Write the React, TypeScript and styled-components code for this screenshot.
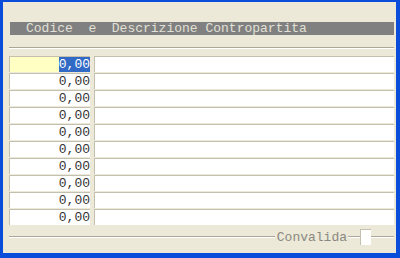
import React from "react";
import styled, { createGlobalStyle } from "styled-components";

const Colors = {
  frame: "#0A4DDA",
  face: "#ECE9D8",
  shadow: "#ACA899",
  cellEdge: "#C4C0B0",
  header: "#808080",
  headerText: "#E2E0D6",
  text: "#333333",
  yellow: "#FFFFC4",
  select: "#316AC5",
};

const GlobalStyle = createGlobalStyle`
  html, body {
    margin: 0;
    padding: 0;
    background: ${Colors.frame};
  }
`;

const Window = styled.div`
  width: 400px;
  height: 258px;
  box-sizing: border-box;
  border-style: solid;
  border-color: ${Colors.frame};
  border-width: 2px 4px 5px 3px;
  background: ${Colors.face};
  padding: 20px 2px 0 6px;
  display: flex;
  flex-direction: column;
  font-family: "Liberation Mono", "Courier New", monospace;
  font-size: 13px;
`;

const HeaderBar = styled.div`
  height: 13px;
  margin-left: 1px;
  background: ${Colors.header};
  color: ${Colors.headerText};
  line-height: 13px;
  padding-left: 16px;
  white-space: pre;
`;

const Separator = styled.div`
  margin-top: 12px;
  height: 1px;
  background: ${Colors.shadow};
  border-bottom: 1px solid #fff;
`;

const Rows = styled.div`
  margin-top: 7px;
  display: flex;
  flex-direction: column;
  gap: 1px;
`;

const Row = styled.div`
  display: grid;
  grid-template-columns: 81px 1fr;
  column-gap: 4px;
  height: 16px;
`;

const Cell = styled.div<{ $bg?: string }>`
  box-sizing: border-box;
  height: 16px;
  background: ${(p) => p.$bg || "#fff"};
  border-top: 1px solid ${Colors.cellEdge};
  border-left: 1px solid ${Colors.cellEdge};
  display: flex;
  align-items: center;
  justify-content: flex-end;
  color: ${Colors.text};
  line-height: 15px;
`;

const Amount = styled.span<{ $selected?: boolean }>`
  background: ${(p) => (p.$selected ? Colors.select : "transparent")};
  color: ${(p) => (p.$selected ? "#fff" : Colors.text)};
  line-height: 15px;
`;

const Footer = styled.div`
  margin-top: 1px;
  height: 22px;
  display: flex;
  align-items: center;
`;

const FooterLine = styled.div`
  flex: 1;
  height: 1px;
  background: ${Colors.shadow};
  border-bottom: 1px solid #fff;
`;

const FooterLabel = styled.span`
  color: #8a8880;
  padding: 0 1px 0 2px;
  line-height: 13px;
`;

const CheckBox = styled.div`
  width: 10px;
  height: 15px;
  background: #fff;
  border-left: 1px solid ${Colors.cellEdge};
  border-top: 1px solid ${Colors.cellEdge};
`;

const ShortLine = styled(FooterLine)`
  flex: 0 0 23px;
`;

const TinyLine = styled(FooterLine)`
  flex: 0 0 12px;
`;

const App: React.FC = () => {
  const rows = Array.from({ length: 10 }, (_, i) => i);
  return (
    <>
      <GlobalStyle />
      <Window>
        <HeaderBar>{"Codice  e  Descrizione Contropartita"}</HeaderBar>
        <Separator />
        <Rows>
          {rows.map((i) => (
            <Row key={i}>
              <Cell $bg={i === 0 ? Colors.yellow : undefined}>
                <Amount $selected={i === 0}>0,00</Amount>
              </Cell>
              <Cell />
            </Row>
          ))}
        </Rows>
        <Footer>
          <FooterLine />
          <FooterLabel>Convalida</FooterLabel>
          <TinyLine />
          <CheckBox />
          <ShortLine />
        </Footer>
      </Window>
    </>
  );
};

export default App;
